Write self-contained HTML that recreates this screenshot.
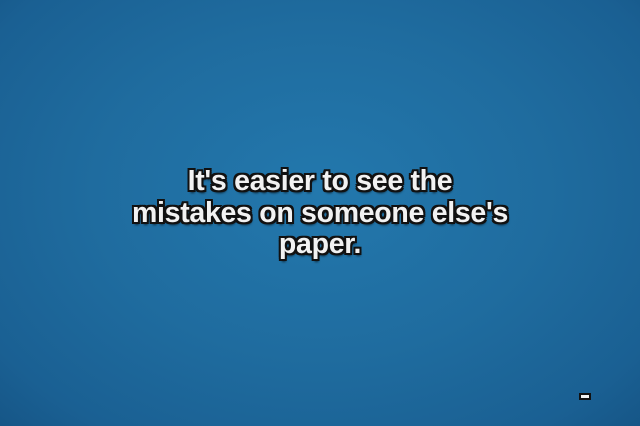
<!DOCTYPE html>
<html><head><style>
html,body{margin:0;padding:0}
body{width:640px;height:426px;overflow:hidden;position:relative;
background:radial-gradient(ellipse at 50% 45%,#2378ad 0%,#1f6c9f 50%,#1a6093 85%,#165687 100%);
font-family:"Liberation Sans",sans-serif}
.t{position:absolute;left:0;width:640px;top:166px;text-align:center;color:#f2f2f2;font-weight:bold;font-size:28.5px;line-height:31.5px;letter-spacing:-0.3px;
text-shadow:-2px -2px 0 #111,2px -2px 0 #111,-2px 2px 0 #111,2px 2px 0 #111,0 2px 0 #111,0 -2px 0 #111,2px 0 0 #111,-2px 0 0 #111,1px 3px 2px rgba(0,0,0,.6)}
.d{position:absolute;left:579px;top:393px;width:12px;height:7px;background:#111}
.d:after{content:"";position:absolute;left:2px;top:2px;width:8px;height:3px;background:#f2f2f2}
</style></head><body>
<div class="t">It's easier to see the<br>mistakes on someone else's<br>paper.</div>
<div class="d"></div>
</body></html>
